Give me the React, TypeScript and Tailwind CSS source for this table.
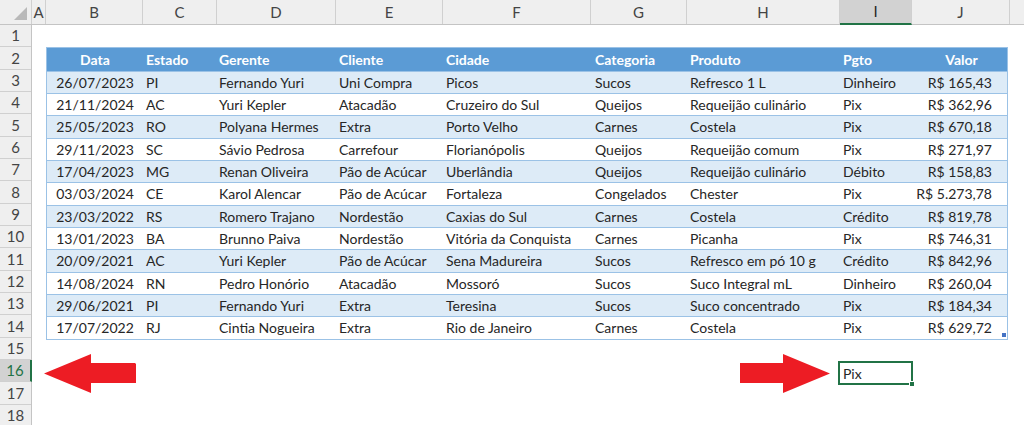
import React from 'react';

const colHeaders = [
  { label: 'A', cls: 'w-[14px]' },
  { label: 'B', cls: 'w-[97px]' },
  { label: 'C', cls: 'w-[74px]' },
  { label: 'D', cls: 'w-[119px]' },
  { label: 'E', cls: 'w-[107px]' },
  { label: 'F', cls: 'w-[148px]' },
  { label: 'G', cls: 'w-[96px]' },
  { label: 'H', cls: 'w-[153px]' },
  { label: 'I', cls: 'w-[72px]', selected: true },
  { label: 'J', cls: 'w-[98px]' },
];

// widths of the table columns B..J (table has 1px border on each side)
const tableCols = [
  'w-[96px] justify-center',
  'w-[74px] pl-[3px]',
  'w-[119px] pl-[2px]',
  'w-[107px] pl-[3px]',
  'w-[148px] pl-[3px]',
  'w-[96px] pl-[4px]',
  'w-[153px] pl-[3px]',
  'w-[72px] pl-[3px]',
  'w-[95px] justify-end pr-[15px]',
];

const headers = ['Data', 'Estado', 'Gerente', 'Cliente', 'Cidade', 'Categoria', 'Produto', 'Pgto', 'Valor'];

const rows = [
  ['26/07/2023', 'PI', 'Fernando Yuri', 'Uni Compra', 'Picos', 'Sucos', 'Refresco 1 L', 'Dinheiro', 'R$ 165,43'],
  ['21/11/2024', 'AC', 'Yuri Kepler', 'Atacadão', 'Cruzeiro do Sul', 'Queijos', 'Requeijão culinário', 'Pix', 'R$ 362,96'],
  ['25/05/2023', 'RO', 'Polyana Hermes', 'Extra', 'Porto Velho', 'Carnes', 'Costela', 'Pix', 'R$ 670,18'],
  ['29/11/2023', 'SC', 'Sávio Pedrosa', 'Carrefour', 'Florianópolis', 'Queijos', 'Requeijão comum', 'Pix', 'R$ 271,97'],
  ['17/04/2023', 'MG', 'Renan Oliveira', 'Pão de Acúcar', 'Uberlândia', 'Queijos', 'Requeijão culinário', 'Débito', 'R$ 158,83'],
  ['03/03/2024', 'CE', 'Karol Alencar', 'Pão de Acúcar', 'Fortaleza', 'Congelados', 'Chester', 'Pix', 'R$ 5.273,78'],
  ['23/03/2022', 'RS', 'Romero Trajano', 'Nordestão', 'Caxias do Sul', 'Carnes', 'Costela', 'Crédito', 'R$ 819,78'],
  ['13/01/2023', 'BA', 'Brunno Paiva', 'Nordestão', 'Vitória da Conquista', 'Carnes', 'Picanha', 'Pix', 'R$ 746,31'],
  ['20/09/2021', 'AC', 'Yuri Kepler', 'Pão de Acúcar', 'Sena Madureira', 'Sucos', 'Refresco em pó 10 g', 'Crédito', 'R$ 842,96'],
  ['14/08/2024', 'RN', 'Pedro Honório', 'Atacadão', 'Mossoró', 'Sucos', 'Suco Integral mL', 'Dinheiro', 'R$ 260,04'],
  ['29/06/2021', 'PI', 'Fernando Yuri', 'Extra', 'Teresina', 'Sucos', 'Suco concentrado', 'Pix', 'R$ 184,34'],
  ['17/07/2022', 'RJ', 'Cintia Nogueira', 'Extra', 'Rio de Janeiro', 'Carnes', 'Costela', 'Pix', 'R$ 629,72'],
];

const rowNumbers = Array.from({ length: 18 }, (_, i) => i + 1);

function ArrowLeft() {
  return (
    <svg width="92" height="39" viewBox="0 0 92 39" className="shrink-0">
      <polygon points="0,19.5 47,0 47,9 91,9 92,10 92,29 47,29 47,39" fill="#ed1c24" />
    </svg>
  );
}

function ArrowRight() {
  return (
    <svg width="90" height="39" viewBox="0 0 90 39" className="shrink-0">
      <polygon points="0,9 43,9 43,0 90,19.5 43,39 43,29 0,29" fill="#ed1c24" />
    </svg>
  );
}

function App() {
  return (
    <div className="w-[1024px] h-[425px] overflow-hidden bg-white font-['Lato',sans-serif] text-[#262626]">
      {/* column letters */}
      <div className="flex h-[25px] bg-[#efefef] border-b border-[#c4c4c4] text-[15px] text-[#444]">
        <div className="relative w-[32px] shrink-0 border-r border-[#d0d0d0]">
          <svg width="14" height="14" viewBox="0 0 14 14" className="absolute right-[3px] bottom-[3px]">
            <polygon points="13,0 13,13 0,13" fill="#b9b9b9" />
          </svg>
        </div>
        {colHeaders.map((c) => (
          <div
            key={c.label}
            className={
              c.selected
                ? `${c.cls} shrink-0 flex items-center justify-center bg-[#d2d2d2] border-r border-[#d0d0d0] border-b-2 border-b-[#217346] -mb-px text-[#262626]`
                : `${c.cls} shrink-0 flex items-center justify-center border-r border-[#d0d0d0]`
            }
          >
            {c.label}
          </div>
        ))}
        <div className="flex-1" />
      </div>

      <div className="flex">
        {/* row numbers */}
        <div className="w-[32px] shrink-0 flex flex-col bg-[#efefef] border-r border-[#c4c4c4] text-[15px] text-[#444]">
          {rowNumbers.map((n) => (
            <div
              key={n}
              className={
                n === 16
                  ? 'h-[22.33px] flex items-center justify-center bg-[#d2d2d2] border-b border-[#d0d0d0] border-r-2 border-r-[#217346] -mr-px text-[#217346]'
                  : 'h-[22.33px] flex items-center justify-center border-b border-[#d0d0d0]'
              }
            >
              {n}
            </div>
          ))}
        </div>

        {/* sheet */}
        <div className="flex-1 flex flex-col text-[14px]">
          <div className="h-[22.33px]" />

          <div className="ml-[14px] w-[962px] border border-[#9bc2e6] border-b-0 relative">
            <div className="flex h-[22.33px] bg-[#5b9bd5] text-white font-bold">
              {headers.map((h, i) => (
                <div
                  key={h}
                  className={`${tableCols[i]} shrink-0 flex items-center ${i === 8 ? '!justify-center !pr-0 pl-[4px]' : ''}`}
                >
                  {h}
                </div>
              ))}
            </div>
            {rows.map((r, ri) => (
              <div
                key={ri}
                className={
                  ri % 2 === 0
                    ? 'flex h-[22.33px] bg-[#ddebf7] border-t border-[#9bc2e6]'
                    : 'flex h-[22.33px] bg-white border-t border-[#9bc2e6]'
                }
              >
                {r.map((v, ci) => (
                  <div key={ci} className={`${tableCols[ci]} shrink-0 flex items-center whitespace-nowrap`}>
                    {v}
                  </div>
                ))}
              </div>
            ))}
            <div className="border-b border-[#9bc2e6]" />
            <div className="absolute right-[1px] bottom-[3px] w-[4px] h-[4px] bg-[#4472c4]" />
          </div>

          <div className="h-[22.33px]" />

          {/* row 16 */}
          <div className="h-[22.33px] flex items-center">
            <div className="ml-[12px]">
              <ArrowLeft />
            </div>
            <div className="ml-[604px]">
              <ArrowRight />
            </div>
            <div className="relative ml-[8px] w-[75px] h-[24px] shrink-0 border-2 border-[#217346] flex items-center pl-[3px]">
              Pix
              <div className="absolute -right-[4px] -bottom-[4px] w-[6px] h-[6px] bg-[#217346] border border-white" />
            </div>
          </div>
        </div>
      </div>
    </div>
  );
}

export default App;
